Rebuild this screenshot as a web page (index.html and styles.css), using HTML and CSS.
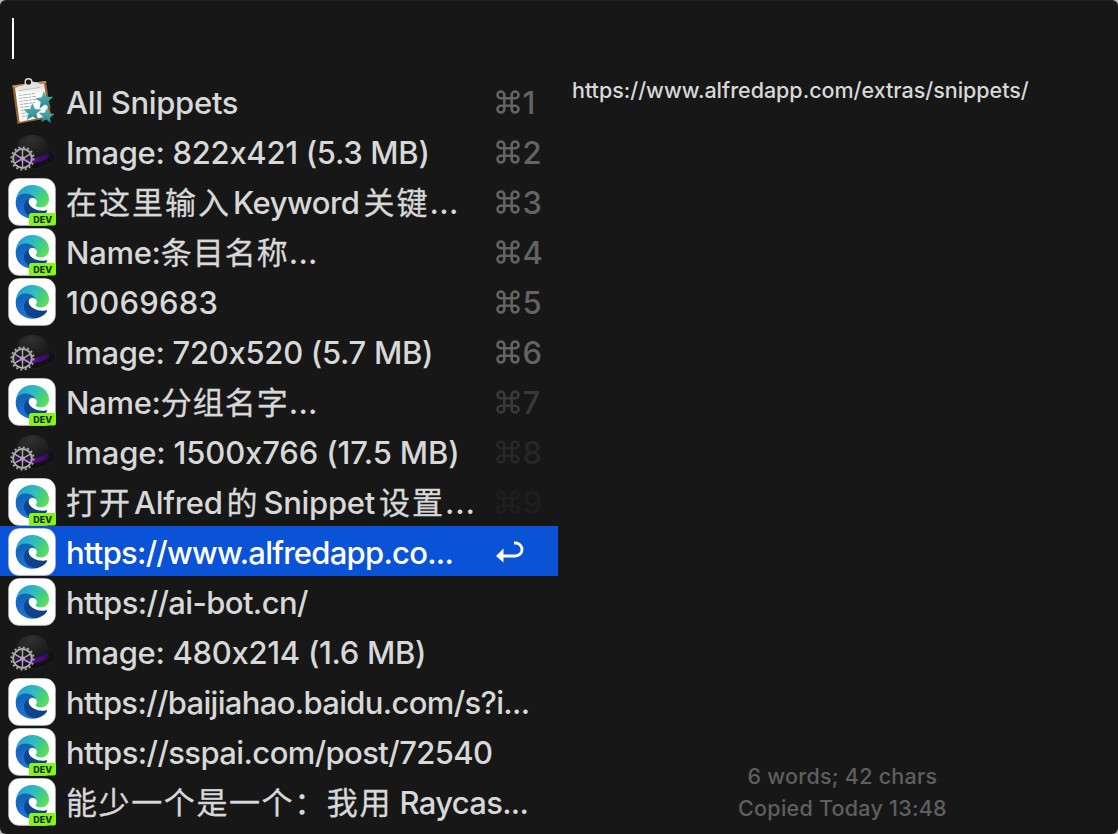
FILE: index.html
```
<!DOCTYPE html>
<html lang="zh-CN">
<head>
<meta charset="utf-8">
<title>Clipboard History</title>
<link rel="stylesheet" href="styles.css">
</head>
<body>
<svg class="defs" width="0" height="0" aria-hidden="true">
  <defs>
    <linearGradient id="paper" x1="0" y1="0" x2="0" y2="1"><stop offset="0" stop-color="#d8d8d8"/><stop offset=".3" stop-color="#fff"/><stop offset="1" stop-color="#f4f4f4"/></linearGradient>
    <linearGradient id="star" x1="0" y1="0" x2="0" y2="1"><stop offset="0" stop-color="#55b8bd"/><stop offset="1" stop-color="#2c8589"/></linearGradient>
    <radialGradient id="dome" cx=".45" cy=".2" r=".8"><stop offset="0" stop-color="#303030"/><stop offset="1" stop-color="#171717"/></radialGradient>
    <linearGradient id="band" x1="0" y1="0" x2="1" y2="0"><stop offset="0" stop-color="#3c0a66"/><stop offset=".6" stop-color="#520e87"/><stop offset="1" stop-color="#34085a"/></linearGradient>
    <linearGradient id="swirl" x1="0" y1=".2" x2="1" y2=".7"><stop offset="0" stop-color="#249fd6"/><stop offset=".45" stop-color="#2fb9c4"/><stop offset=".75" stop-color="#45cf7c"/><stop offset="1" stop-color="#5fe05a"/></linearGradient>
    <linearGradient id="left" x1=".3" y1="0" x2=".6" y2="1"><stop offset="0" stop-color="#1262b0"/><stop offset=".5" stop-color="#1a6ccc"/><stop offset="1" stop-color="#1c74d2"/></linearGradient>
    <linearGradient id="deep" x1="0" y1="0" x2="1" y2="1"><stop offset="0" stop-color="#0f458f"/><stop offset="1" stop-color="#123f88"/></linearGradient>
    <symbol id="starshape" viewBox="0 0 20 20"><path fill="url(#star)" d="M10 0l2.700 6.800 7.300.5-5.600 4.600 1.900 7.100-6.300-4-6.300 4 1.900-7.100L0 7.300l7.300-.5z"/></symbol>
    <symbol id="snippets" viewBox="0 0 48 50">
      <path d="M4 10L40 5l4 37-33 7z" fill="#080808" opacity=".5"/>
      <path d="M4.300 9.500L38 5l5.500 36.500L9.500 48z" fill="#91632f"/>
      <path d="M4.300 9.500L38 5l.5 2L5 11.500z" fill="#c09155"/>
      <path d="M7 11.500L36 7.500 41 40 11.500 46z" fill="url(#paper)"/>
      <g stroke="#999" stroke-width=".8" stroke-dasharray="3 .7 5 .6"><path d="M11 19.500l16-2M11.300 22.500l17-2.300M11.600 25.500l18-2.500M12 28.500l15-2M12.500 31.500l12-1.600M13 34.500l9-1.200M13.500 37.500l7-1M14 40.500l7-1"/></g>
      <path d="M9 10.500l6-1 5-4h4l7 1.500 1 4-21.500 3.500z" fill="#e3e3e3"/>
      <path d="M10.500 14.500L32 11l.2.800L11 15.300z" fill="#999" opacity=".6"/>
      <circle cx="20.500" cy="6" r="3.300" fill="#21180f" stroke="#ddd" stroke-width="1.400"/>
      <use href="#starshape" x="27.500" y="15" width="18" height="18" transform="rotate(-5 36 24)"/>
      <use href="#starshape" x="15.500" y="27" width="18" height="18"/>
      <use href="#starshape" x="30.500" y="31.500" width="16" height="16" transform="rotate(5 38 40)"/>
    </symbol>
    <symbol id="hat" viewBox="0 0 48 50">
      <ellipse cx="27" cy="33" rx="20.500" ry="9.500" fill="#121212" stroke="#222" stroke-width=".8" transform="rotate(-8 27 32)"/>
      <path d="M8 27C8 15 14 9 25 9S40 15 41 27c-4 7-27 9-33 0z" fill="url(#dome)"/>
      <path d="M7 29c8 5 22 5 33.500-2.500l.5 5C33 38 16 39 7 34z" fill="url(#band)"/>
      <g fill="none" stroke="#adadad">
        <circle cx="14.500" cy="32.500" r="11.200" stroke-width="1.800" stroke-dasharray="2 2.398"/>
        <circle cx="14.500" cy="32.500" r="9.400" stroke-width="2"/>
        <path stroke-width="1.400" d="M14.500 23v19M6.300 27.800l16.400 9.500M6.300 37.300l16.400-9.500"/>
      </g>
      <circle cx="14.500" cy="32.500" r="2.300" fill="#aaa"/>
    </symbol>
    <symbol id="edge" viewBox="0 0 48 50">
      <rect x=".3" y="2.300" width="47.400" height="47.400" rx="11" fill="#d9d9d9"/>
      <rect x="1" y="2.800" width="46" height="46" rx="10.500" fill="#fff"/>
      <path fill="url(#swirl)" d="M7.700 26C7.700 16 15 9 24.300 9 34 9 41 15.500 41 23.300c0 5-3.700 8.200-8 8.200-3.300 0-5.300-1-5.300-2.200 0-.8 1.100-1.500 1.100-3.300 0-2.400-1.900-4.200-4.300-4.200L18 24z"/>
      <path fill="url(#left)" d="M7.700 27c.3-5.800 4.300-9.600 9.600-9.600 5 0 9.500 2.200 11.300 6.800-.8-1.500-2.300-2.400-4.100-2.400-3.200 0-5 2.600-5 5.800 0 7 6 12.800 11.500 13.400-2 .9-4 1.700-6.300 1.700C15 42.700 7.700 36 7.700 27z"/>
      <path fill="url(#deep)" d="M22 22.600c-4 1.200-6 4.900-6 8.400 0 6.500 6 11.500 12.500 11.200 4.500-.8 8.300-3.200 10.500-6.700.5-.9-.2-1.600-1-1.300-2 .6-4 .7-6 .4-5.500-.8-10.500-3.600-11.300-8.300-.2-1.500.3-2.800 1.300-3.700z"/>
    </symbol>
    <symbol id="dev" viewBox="0 0 27 13"><path fill="#86f414" d="M2.500 0H27v10.500a2 2 0 01-2 2H0V2.500A2.500 2.500 0 012.500 0z"/><text x="13.700" y="9.800" class="dev-text" text-anchor="middle" textLength="19">DEV</text></symbol>
    <symbol id="cmd" viewBox="0 0 24 24"><path fill="none" stroke="currentColor" stroke-width="2.600" d="M8.300 8.300V4.700A3.400 3.400 0 104.700 8.300h14.600a3.400 3.400 0 10-3.600-3.600v14.600a3.400 3.400 0 103.600-3.600H4.700a3.400 3.400 0 103.600 3.600z"/></symbol>
  </defs>
</svg>
<main class="window">
  <header class="search"><span class="caret"></span></header>
  <div class="content">
    <ul class="list">
      <li class="row"><svg class="icon"><use href="#snippets"/></svg><span class="title">All Snippets</span><span class="key"><svg><use href="#cmd"/></svg>1</span></li>
      <li class="row"><svg class="icon"><use href="#hat"/></svg><span class="title">Image: 822x421 (5.3 MB)</span><span class="key"><svg><use href="#cmd"/></svg>2</span></li>
      <li class="row"><svg class="icon"><use href="#edge"/><use href="#dev" x="21" y="37" width="27" height="13"/></svg><span class="title wide"><b>在这里输入</b>Keyword<b>关键</b><i>...</i></span><span class="key"><svg><use href="#cmd"/></svg>3</span></li>
      <li class="row"><svg class="icon"><use href="#edge"/><use href="#dev" x="21" y="37" width="27" height="13"/></svg><span class="title">Name:<b>条目名称</b><i>...</i></span><span class="key"><svg><use href="#cmd"/></svg>4</span></li>
      <li class="row"><svg class="icon"><use href="#edge"/></svg><span class="title number">10069683</span><span class="key"><svg><use href="#cmd"/></svg>5</span></li>
      <li class="row"><svg class="icon"><use href="#hat"/></svg><span class="title">Image: 720x520 (5.7 MB)</span><span class="key"><svg><use href="#cmd"/></svg>6</span></li>
      <li class="row"><svg class="icon"><use href="#edge"/><use href="#dev" x="21" y="37" width="27" height="13"/></svg><span class="title">Name:<b>分组名字</b><i>...</i></span><span class="key dim1"><svg><use href="#cmd"/></svg>7</span></li>
      <li class="row"><svg class="icon"><use href="#hat"/></svg><span class="title long">Image: 1500x766 (17.5 MB)</span><span class="key dim2"><svg><use href="#cmd"/></svg>8</span></li>
      <li class="row"><svg class="icon"><use href="#edge"/><use href="#dev" x="21" y="37" width="27" height="13"/></svg><span class="title wide mixed"><b>打开</b>Alfred<b class="between">的</b>Snippet<b>设置</b><i>...</i></span><span class="key dim3"><svg><use href="#cmd"/></svg>9</span></li>
      <li class="row selected"><svg class="icon"><use href="#edge"/></svg><span class="title url">https://www.alfredapp.co...</span><span class="key"><svg class="return" viewBox="0 0 28 22"><path d="M18 2h1.500a6.200 6.200 0 010 13H7" fill="none" stroke="#fff" stroke-width="2.800"/><path d="M0 15L7.500 7.500v14z" fill="#fff"/></svg></span></li>
      <li class="row"><svg class="icon"><use href="#edge"/></svg><span class="title url-short">https://ai-bot.cn/</span></li>
      <li class="row"><svg class="icon"><use href="#hat"/></svg><span class="title">Image: 480x214 (1.6 MB)</span></li>
      <li class="row"><svg class="icon"><use href="#edge"/></svg><span class="title url-long">https://baijiahao.baidu.com/s?i...</span></li>
      <li class="row"><svg class="icon"><use href="#edge"/><use href="#dev" x="21" y="37" width="27" height="13"/></svg><span class="title url-short">https://sspai.com/post/72540</span></li>
      <li class="row"><svg class="icon"><use href="#edge"/><use href="#dev" x="21" y="37" width="27" height="13"/></svg><span class="title last"><b>能少一个是一个：我用</b> Raycas...</span></li>
    </ul>
    <section class="preview">
      <p class="body">https://www.alfredapp.com/extras/snippets/</p>
      <footer class="meta"><p>6 words; 42 chars</p><p>Copied Today 13:48</p></footer>
    </section>
  </div>
</main>
</body>
</html>
```
FILE: styles.css
```
* { box-sizing: border-box; }
body { margin: 0; background: #b8b8b8; overflow: hidden; }
.defs { display: block; height: 0; }
.window { display: flex; flex-direction: column; width: 1118px; height: 834px; background: #171717; border-radius: 6px; overflow: hidden; font-family: Inter, "Noto Sans CJK SC", sans-serif; font-weight: 450; font-feature-settings: "calt" 0; color: #d8d8d8; border-top: 1px solid #202020; }
.search { height: 75px; padding: 17px 12px 0; }
.caret { display: block; width: 2px; height: 41px; background: #fff; }
.content { display: flex; flex: 1; }
.list { list-style: none; margin: 0; padding: 0; width: 558px; }
.row { display: flex; align-items: center; height: 50px; padding-left: 8px; }
.row.selected { background: #0a52d6; color: #fff; }
.icon { width: 48px; height: 50px; flex: none; }
.dev-text { font: 800 9px Inter, sans-serif; fill: #16300a; }
.title { width: 440px; flex: none; padding-left: 10px; font-size: 31px; line-height: 50px; height: 50px; white-space: nowrap; padding-top: 2px; letter-spacing: -0.3px; }
.title b { font-weight: 400; letter-spacing: 1px; -webkit-text-stroke: 0.3px; }
.title i { font-style: normal; letter-spacing: 0.3px; }
.title.long { letter-spacing: -0.15px; }
.title.wide { letter-spacing: -0.5px; }
.wide b { letter-spacing: 2px; }
.wide b:not(:first-child) { margin-left: 4px; }
.wide b:first-child { margin-right: 2px; }
.title.wide.mixed { letter-spacing: -0.3px; }
.mixed .between { margin-right: 4px; }
.mixed i { letter-spacing: 0.8px; }
.title.number { letter-spacing: 0.2px; }
.title.url { letter-spacing: -0.75px; }
.title.url-long { letter-spacing: -0.67px; }
.title.url-short { letter-spacing: -0.6px; }
.last b { letter-spacing: 1.6px; }
.title.last { letter-spacing: -0.7px; }
.key { display: flex; align-items: center; gap: 3px; height: 50px; padding-top: 2px; font-size: 31px; color: #636363; margin-left: -0.5px; }
.key svg { width: 24px; height: 24px; }
.key .return { width: 28px; height: 22px; }
.dim1 { color: #393939; }
.dim2 { color: #272727; }
.dim3 { color: #1e1e1e; }
.preview { display: flex; flex-direction: column; flex: 1; justify-content: space-between; padding: 0 14px; }
.preview p { margin: 0; }
.body { font-size: 21.500px; line-height: 28px; letter-spacing: -0.02px; }
.meta { text-align: center; font-size: 21.500px; line-height: 32px; letter-spacing: 0.25px; color: #5f5f5f; padding: 0 0 10px 9px; }
```
